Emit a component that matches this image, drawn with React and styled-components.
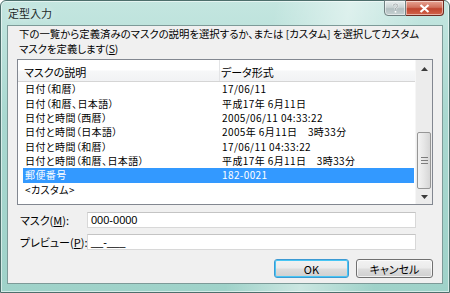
import React, { useState } from 'react'
import styled, { createGlobalStyle } from 'styled-components'

const GlobalStyle = createGlobalStyle`
  html, body {
    margin: 0;
    padding: 0;
    background: #ffffff;
  }
  body {
    font-family: "Noto Sans CJK JP", "Liberation Sans", sans-serif;
    font-size: 11px;
    color: #000;
  }
`

const masks = [
  { desc: '日付（和暦）', format: '17/06/11' },
  { desc: '日付（和暦、日本語）', format: '平成17年 6月11日' },
  { desc: '日付と時間（西暦）', format: '2005/06/11 04:33:22' },
  { desc: '日付と時間（日本語）', format: '2005年 6月11日　3時33分' },
  { desc: '日付と時間（和暦）', format: '17/06/11 04:33:22' },
  { desc: '日付と時間（和暦、日本語）', format: '平成17年 6月11日　3時33分' },
  { desc: '郵便番号', format: '182-0021' },
  { desc: '<カスタム>', format: '' },
]

export default function App() {
  const [selected, setSelected] = useState(6)

  return (
    <>
      <GlobalStyle />
      <Window>
        <TitleBar>
          <Title>定型入力</Title>
          <Caption>
            <CapButton>
              <svg width="9" height="10" viewBox="0 0 9 10">
                <path d="M2 3 Q2 1 4.5 1 Q7 1 7 3 Q7 4.5 4.5 5.2 L4.5 6.8" fill="none" stroke="#fff" strokeWidth="1.6" />
                <rect x="3.7" y="8" width="1.6" height="1.6" fill="#fff" />
                <path d="M2 3 Q2 1 4.5 1 Q7 1 7 3 Q7 4.5 4.5 5.2 L4.5 6.8" fill="none" stroke="#6a7478" strokeWidth="0.6" />
              </svg>
            </CapButton>
            <CapButton close>
              <svg width="11" height="9" viewBox="0 0 11 9">
                <path d="M1.5 1 L9.5 8 M9.5 1 L1.5 8" stroke="#fff" strokeWidth="2.2" />
              </svg>
            </CapButton>
          </Caption>
        </TitleBar>

        <Client>
          <Intro>
            <IntroLine>下の一覧から定義済みのマスクの説明を選択するか、または [カスタム] を選択してカスタム</IntroLine>
            <IntroLine>マスクを定義します(<u>S</u>)</IntroLine>
          </Intro>

          <ListBox>
            <ListMain>
              <HeaderRow>
                <HeaderCell>マスクの説明</HeaderCell>
                <HeaderCell last>データ形式</HeaderCell>
              </HeaderRow>
              <Rows>
                {masks.map((m, i) => (
                  <Row key={i} active={i === selected} onClick={() => setSelected(i)}>
                    <Cell>{m.desc}</Cell>
                    <Cell>{m.format}</Cell>
                  </Row>
                ))}
              </Rows>
            </ListMain>
            <ScrollBar>
              <Arrow>
                <svg width="7" height="4" viewBox="0 0 7 4"><path d="M0 4 L3.5 0 L7 4 Z" fill="#3b3b3b" /></svg>
              </Arrow>
              <Track>
                <Thumb>
                  <svg width="7" height="7" viewBox="0 0 7 7">
                    <path d="M0 0.5 H7 M0 3.5 H7 M0 6.5 H7" stroke="#7c7c7c" strokeWidth="1" />
                  </svg>
                </Thumb>
              </Track>
              <Arrow bottom>
                <svg width="7" height="4" viewBox="0 0 7 4"><path d="M0 0 L3.5 4 L7 0 Z" fill="#3b3b3b" /></svg>
              </Arrow>
            </ScrollBar>
          </ListBox>

          <Fields>
            <FieldRow>
              <Label>マスク(<u>M</u>):</Label>
              <Input>000-0000</Input>
            </FieldRow>
            <FieldRow>
              <Label>プレビュー(<u>P</u>):</Label>
              <Input>__-___</Input>
            </FieldRow>
          </Fields>

          <Buttons>
            <Button primary>OK</Button>
            <Button>キャンセル</Button>
          </Buttons>
        </Client>
      </Window>
    </>
  )
}

const Window = styled.div`
  width: 450px;
  height: 293px;
  box-sizing: border-box;
  display: flex;
  flex-direction: column;
  border: 1px solid #4d6f6c;
  border-radius: 6px 6px 0 0;
  background:
    linear-gradient(100deg, rgba(255,255,255,0) 55%, rgba(255,255,255,0.45) 70%, rgba(255,255,255,0) 85%),
    linear-gradient(180deg, #c4e6e0 0%, #a9d8d0 40%, #9fd2c9 100%);
  box-shadow: inset 0 0 0 1px rgba(255,255,255,0.55);
`

const TitleBar = styled.div`
  height: 24px;
  display: flex;
  align-items: flex-start;
  justify-content: space-between;
  padding: 0 5px 0 7px;
`

const Title = styled.div`
  padding-top: 5px;
  font-size: 11px;
  line-height: 14px;
  color: #1d2b2b;
  text-shadow: 0 0 6px rgba(255,255,255,0.9);
`

const Caption = styled.div`
  display: flex;
  margin-top: -1px;
`

const CapButton = styled.div`
  width: ${p => (p.close ? '38px' : '22px')};
  height: 16px;
  box-sizing: border-box;
  display: flex;
  align-items: center;
  justify-content: center;
  border: 1px solid ${p => (p.close ? '#6d2a20' : '#6f7f80')};
  border-radius: ${p => (p.close ? '0 0 4px 0' : '0 0 0 4px')};
  border-left-width: ${p => (p.close ? '0' : '1px')};
  background: ${p =>
    p.close
      ? 'linear-gradient(180deg, #e8a493 0%, #d1715d 45%, #c0452f 55%, #d2644a 100%)'
      : 'linear-gradient(180deg, #e8eeee 0%, #c9d3d4 45%, #b3bfc1 55%, #c5d0d1 100%)'};
  box-shadow: inset 0 0 0 1px rgba(255,255,255,0.5);
`

const Client = styled.div`
  flex: 1;
  margin: 0 6px 8px 6px;
  display: flex;
  flex-direction: column;
  background: #f0f0f0;
  border: 1px solid #7d9a98;
  padding: 0 10px 0 9px;
`

const Intro = styled.div`
  padding-left: 2px;
  display: flex;
  flex-direction: column;
`

const IntroLine = styled.div`
  height: 15px;
  line-height: 15px;
  font-size: 10.4px;
  letter-spacing: 0;
  font-feature-settings: "palt";
  white-space: nowrap;
  u { text-decoration: underline; }
`

const ListBox = styled.div`
  margin-top: 3px;
  width: 416px;
  height: 146px;
  box-sizing: border-box;
  display: flex;
  border: 1px solid #828790;
  background: #fff;
`

const ListMain = styled.div`
  flex: 1;
  display: flex;
  flex-direction: column;
  min-width: 0;
`

const HeaderRow = styled.div`
  height: 21px;
  display: grid;
  grid-template-columns: 202px 1fr;
  background: linear-gradient(180deg, #ffffff 0%, #ffffff 45%, #f6f7f8 55%, #f1f2f4 100%);
  border-bottom: 1px solid #d5d5d5;
`

const HeaderCell = styled.div`
  display: flex;
  align-items: center;
  padding-left: ${p => (p.last ? '1px' : '6px')};
  padding-top: 2px;
  border-right: 1px solid ${p => (p.last ? 'transparent' : '#e3e4e6')};
  font-feature-settings: "palt";
`

const Rows = styled.div`
  padding: 0 0 0 5px;
  display: flex;
  flex-direction: column;
`

const Row = styled.div`
  height: 14.36px;
  display: grid;
  grid-template-columns: 197px 1fr;
  align-items: center;
  background: ${p => (p.active ? '#3399ff' : 'transparent')};
  color: ${p => (p.active ? '#fff' : '#000')};
  margin-right: 1px;
`

const Cell = styled.div`
  padding-left: 2px;
  font-size: 10px;
  line-height: 14px;
  letter-spacing: 0.4px;
  white-space: nowrap;
  font-feature-settings: "palt";
`

const ScrollBar = styled.div`
  width: 16px;
  display: flex;
  flex-direction: column;
  background: #ececec;
  border-left: 1px solid #f6f6f6;
`

const Arrow = styled.div`
  height: ${p => (p.bottom ? '15px' : '17px')};
  display: flex;
  align-items: center;
  justify-content: center;
`

const Track = styled.div`
  flex: 1;
  display: flex;
  flex-direction: column;
  justify-content: flex-end;
`

const Thumb = styled.div`
  height: 57px;
  margin: 0 1px;
  box-sizing: border-box;
  display: flex;
  align-items: center;
  justify-content: center;
  border: 1px solid #969696;
  border-radius: 2px;
  background: linear-gradient(90deg, #f3f3f3 0%, #e6e6e6 50%, #d6d6d6 100%);
`

const Fields = styled.div`
  display: flex;
  flex-direction: column;
  gap: 6px;
  margin-top: 7px;
`

const FieldRow = styled.div`
  display: flex;
  align-items: center;
`

const Label = styled.div`
  width: 70px;
  padding-left: 3px;
  box-sizing: border-box;
  font-feature-settings: "palt";
  white-space: nowrap;
  u { text-decoration: underline; }
`

const Input = styled.div`
  width: 329px;
  height: 16px;
  box-sizing: border-box;
  display: flex;
  align-items: center;
  padding-left: 3px;
  background: #fff;
  border: 1px solid #d8d8d8;
  border-top-color: #c4c4c4;
  font-family: "Liberation Sans", "Noto Sans CJK JP", sans-serif;
  font-size: 11px;
`

const Buttons = styled.div`
  display: flex;
  justify-content: flex-end;
  gap: 7px;
  margin-top: 9px;
  width: 416px;
`

const Button = styled.div`
  width: ${p => (p.primary ? '75px' : '77px')};
  height: 19px;
  box-sizing: border-box;
  display: flex;
  align-items: center;
  justify-content: center;
  border: 1px solid ${p => (p.primary ? '#3c9ad3' : '#707070')};
  border-radius: 3px;
  background: linear-gradient(180deg, #f2f2f2 0%, #ebebeb 48%, #dddddd 52%, #cfcfcf 100%);
  box-shadow: inset 0 0 0 1px ${p => (p.primary ? '#48c6f4' : 'rgba(255,255,255,0.7)')};
  font-size: 11px;
  font-feature-settings: "palt";
`
